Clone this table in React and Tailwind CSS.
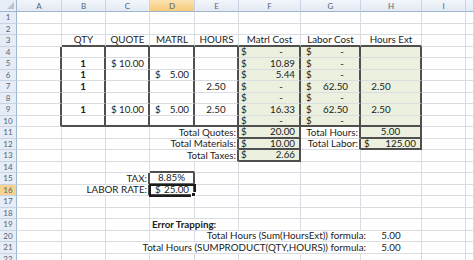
import React from "react";
import clsx from "clsx";

const COLS = ["A", "B", "C", "D", "E", "F", "G", "H", "I", ""];
const ROWS = 22;

// thick box edges are drawn as the right / bottom edge of a cell
const darkR = new Set();
const darkB = new Set();
const noR = new Set();
const green = new Set();
const add = (set, cols, r0, r1) => {
  cols.forEach((c) => {
    for (let r = r0; r <= r1; r++) set.add(c + r);
  });
};

add(darkR, ["A", "B", "C", "D", "E", "F", "G", "H"], 4, 10);
add(darkR, ["E", "F"], 11, 13);
add(darkR, ["G", "H"], 11, 12);
add(darkR, ["C", "D"], 15, 16);
add(darkB, ["B", "C", "D", "E", "F", "G", "H"], 3, 3);
add(darkB, ["B", "C", "D", "E", "F", "G", "H"], 10, 10);
add(darkB, ["F", "H"], 11, 12);
add(darkB, ["F"], 13, 13);
add(darkB, ["D"], 14, 16);

// gridlines hidden under overflowing labels
add(noR, ["D"], 11, 13);
add(noR, ["B"], 16, 16);
add(noR, ["D"], 19, 19);
add(noR, ["E", "F", "G"], 20, 20);
add(noR, ["C", "D", "E", "F", "G"], 21, 21);

add(green, ["F"], 4, 13);
add(green, ["G"], 4, 10);
add(green, ["H"], 4, 12);

// money cells: [dollar padding, number padding, dash padding]
const money = {
  C: ["pl-[5px]", "pr-[4px]", "pr-[4px]"],
  D: ["pl-[5px]", "pr-[4px]", "pr-[4px]"],
  F: ["pl-[2px]", "pr-[4px]", "pr-[16px]"],
  G: ["pl-[5px]", "pr-[11px]", "pr-[15px]"],
  H: ["pl-[3px]", "pr-[4px]", "pr-[16px]"],
};

const data = {
  B3: { t: "QTY" },
  C3: { t: "QUOTE" },
  D3: { t: "MATRL" },
  E3: { t: "HOURS" },
  F3: { t: "Matrl Cost" },
  G3: { t: "Labor Cost" },
  H3: { t: "Hours Ext" },
  F4: { m: "-" },
  G4: { m: "-" },
  B5: { t: "1", b: true },
  C5: { m: "10.00" },
  F5: { m: "10.89" },
  G5: { m: "-" },
  B6: { t: "1", b: true },
  D6: { m: "5.00" },
  F6: { m: "5.44" },
  G6: { m: "-" },
  B7: { t: "1", b: true },
  E7: { t: "2.50" },
  F7: { m: "-" },
  G7: { m: "62.50" },
  H7: { t: "2.50", off: true },
  F8: { m: "-" },
  G8: { m: "-" },
  B9: { t: "1", b: true },
  C9: { m: "10.00" },
  D9: { m: "5.00" },
  E9: { t: "2.50" },
  F9: { m: "16.33" },
  G9: { m: "62.50" },
  H9: { t: "2.50", off: true },
  F10: { m: "-" },
  G10: { m: "-" },
  E11: { t: "Total Quotes:", r: true },
  F11: { m: "20.00" },
  G11: { t: "Total Hours:", r: true },
  H11: { t: "5.00" },
  E12: { t: "Total Materials:", r: true },
  F12: { m: "10.00" },
  G12: { t: "Total Labor:", r: true },
  H12: { m: "125.00" },
  E13: { t: "Total Taxes:", r: true },
  F13: { m: "2.66" },
  C15: { t: "TAX:", r: true },
  D15: { t: "8.85%" },
  C16: { t: "LABOR RATE:", r: true },
  D16: { m: "25.00" },
  D19: { t: "Error Trapping:", l: true, b: true, over: true },
  G20: { t: "Total Hours (Sum(HoursExt)) formula:", r: true, over: true, shift: true },
  H20: { t: "5.00" },
  G21: { t: "Total Hours (SUMPRODUCT(QTY,HOURS)) formula:", r: true, over: true, shift: true },
  H21: { t: "5.00" },
};

function Content({ col, d }) {
  if (!d) return null;
  if (d.m) {
    const [pl, pr, dash] = money[col];
    return (
      <div className={clsx("flex w-full justify-between", pl, d.m === "-" ? dash : pr)}>
        <span>$</span>
        <span>{d.m}</span>
      </div>
    );
  }
  return (
    <div
      className={clsx(
        "flex w-full",
        d.r ? "justify-end pr-[1px]" : d.l ? "justify-start pl-[2px]" : "justify-center",
        d.off && "pr-[19px]",
        d.b && "font-bold"
      )}
    >
      <span className={clsx(d.shift && "-mr-[6px]")}>{d.t}</span>
    </div>
  );
}

function Cell({ col, row }) {
  const key = col + row;
  const d = data[key];
  const selected = key === "D16";
  return (
    <div
      className={clsx(
        "flex items-center whitespace-nowrap border-b pt-[1px]",
        darkB.has(key) ? "border-b-2 border-b-[#4f4f4f]" : "border-b-[#d9dce1]",
        noR.has(key) ? "" : darkR.has(key) ? "border-r-2 border-r-[#4f4f4f]" : "border-r border-r-[#d9dce1]",
        key === "D15" && "border-b-[#6b6b6b]",
        green.has(key) ? "bg-[#ebf1de]" : "bg-white",
        d && d.over && "relative z-[1]",
        selected && "relative z-10 outline-2 -outline-offset-1 outline-[#1c1c1c]"
      )}
    >
      <Content col={col} d={d} />
      {selected && <span className="absolute -bottom-[3px] -right-[3px] h-[5px] w-[5px] border border-white bg-[#1c1c1c]" />}
    </div>
  );
}

export default function App() {
  const rows = Array.from({ length: ROWS }, (_, i) => i + 1);
  return (
    <div className="h-[260px] w-[474px] overflow-hidden bg-white font-['Lato',sans-serif] text-[9.8px] leading-none text-[#222]">
      <div className="grid grid-cols-[17px_45px_44px_44px_45px_44px_62px_60px_61px_44px_1fr] grid-rows-[12px_repeat(22,11.5px)]">
        <div className="relative border-b border-r border-b-[#9eb6ce] border-r-[#9eb6ce] bg-[#e9eef6]">
          <span className="absolute bottom-[2px] right-[2px] h-0 w-0 border-b-[7px] border-l-[7px] border-b-[#b6c4d6] border-l-transparent" />
        </div>
        {COLS.map((c) => (
          <div
            key={c || "x"}
            className={clsx(
              "flex items-center justify-center border-b border-r border-b-[#9eb6ce] border-r-[#c8d4e3] text-[8px] text-[#53637c]",
              c === "D" ? "bg-gradient-to-b from-[#fbe3b2] to-[#f6c978]" : "bg-gradient-to-b from-[#f3f6fb] to-[#e3eaf4]"
            )}
          >
            {c}
          </div>
        ))}
        {rows.map((r) => (
          <React.Fragment key={r}>
            <div
              className={clsx(
                "flex items-center justify-center border-b border-r border-b-[#c8d4e3] border-r-[#9eb6ce] text-[8px] text-[#53637c]",
                r === 16 ? "bg-[#f8d28f]" : "bg-[#e6edf6]"
              )}
            >
              {r}
            </div>
            {COLS.map((c) => (
              <Cell key={c || "x"} col={c} row={r} />
            ))}
          </React.Fragment>
        ))}
      </div>
    </div>
  );
}
